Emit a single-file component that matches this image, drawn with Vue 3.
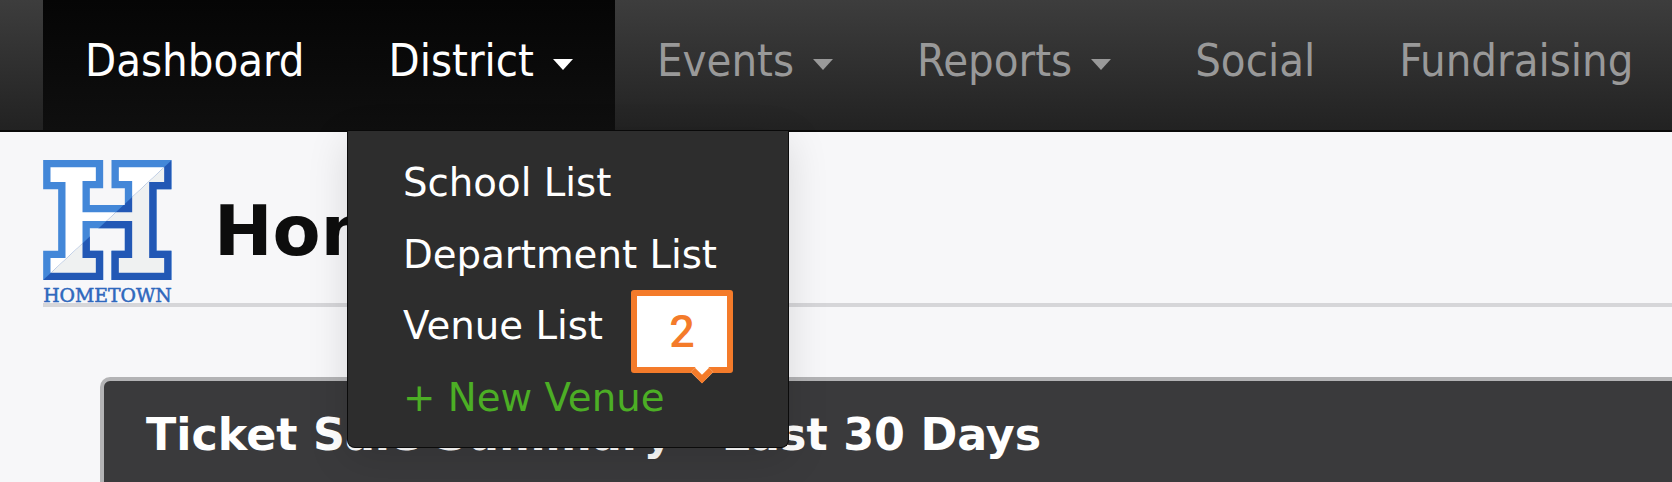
<script setup>
const navItems = [
  { label: 'Dashboard', active: true },
  { label: 'District', active: true, caret: true },
  { label: 'Events', caret: true },
  { label: 'Reports', caret: true },
  { label: 'Social' },
  { label: 'Fundraising' },
]
const menuItems = ['School List', 'Department List', 'Venue List']
const outer = 'M130 90H310V175H270V225H375V175H335V90H515V178H470V362H515V450H335V362H375V295H270V362H310V450H130V362H175V178H130Z'
const inner = 'M152 112H288V153H248V247H397V153H357V112H493V156H448V384H493V428H357V384H397V273H248V384H288V428H152V384H197V156H152Z'
</script>

<template>
  <div class="page">
    <nav class="nav">
      <a
        v-for="item in navItems"
        :key="item.label"
        class="nav-item"
        :class="{ active: item.active }"
      >
        {{ item.label }}<span v-if="item.caret" class="caret"></span>
      </a>
    </nav>

    <header class="head">
      <svg class="logo" viewBox="130 90 386 441" width="129" height="147">
        <defs>
          <clipPath id="lower"><path d="M130 450L516 90V531H130Z" /></clipPath>
        </defs>
        <path :d="outer" fill="#4387d8" />
        <path :d="inner" fill="#ffffff" />
        <g clip-path="url(#lower)">
          <path :d="outer" fill="#2258b5" />
          <path :d="inner" fill="#eff1f1" />
        </g>
        <text x="130" y="517" class="logo-text" textLength="386" lengthAdjust="spacingAndGlyphs">HOMETOWN</text>
      </svg>
      <h1 class="title">Hometown</h1>
    </header>

    <section class="panel">
      <h2 class="panel-title">Ticket Sale Summary - Last 30 Days</h2>
    </section>

    <div class="menu">
      <div v-for="m in menuItems" :key="m" class="menu-item">{{ m }}</div>
      <div class="menu-item new">+ New Venue</div>
      <div class="callout">2<span class="tip"></span></div>
    </div>
  </div>
</template>

<style>
html, body { margin: 0; background: #f7f7f9; overflow: hidden; }
</style>

<style scoped>
.page {
  position: relative;
  width: 1672px;
  height: 482px;
  overflow: hidden;
  background: #f7f7f9;
  font-family: "DejaVu Sans", Verdana, sans-serif;
}
.nav {
  display: flex;
  box-sizing: border-box;
  height: 132px;
  padding-left: 43px;
  background: linear-gradient(#3d3d3d, #222222);
  border-bottom: 2px solid #0a0a0a;
}
.nav-item {
  display: flex;
  align-items: center;
  padding: 0 42px 10px;
  color: #999999;
  font-size: 45px;
  font-stretch: condensed;
  white-space: nowrap;
}
.nav-item.active {
  color: #ffffff;
  background: linear-gradient(#050505, #0f0f0f);
}
.caret {
  width: 0;
  height: 0;
  margin: 8px 0 0 19px;
  border-left: 10px solid transparent;
  border-right: 10px solid transparent;
  border-top: 11px solid currentColor;
}
.head {
  display: flex;
  align-items: flex-start;
  box-sizing: border-box;
  height: 147px;
  margin: 28px 0 0 43px;
  border-bottom: 4px solid #d6d6d9;
}
.logo { flex: none; display: block; overflow: visible; }
.logo-text {
  font-family: "DejaVu Serif", serif;
  font-weight: 400;
  font-size: 54px;
  fill: #2f68bd;
  stroke: #2f68bd;
  stroke-width: 1.5;
}
.title {
  margin: 36px 0 0 42px;
  font-size: 70px;
  font-weight: 700;
  line-height: 1;
  color: #0d0d0d;
}
.panel {
  height: 200px;
  margin: 70px 0 0 100px;
  padding: 26px 0 0 42px;
  border: 4px solid #b3b3b5;
  border-right: 0;
  border-bottom: 0;
  border-radius: 10px 0 0 0;
  background: #3a3a3c;
}
.panel-title {
  margin: 0;
  font-size: 44.4px;
  font-weight: 700;
  line-height: 1.25;
  color: #ffffff;
  white-space: nowrap;
}
.menu {
  position: absolute;
  left: 347px;
  top: 131px;
  width: 442px;
  height: 317px;
  box-sizing: border-box;
  padding: 16px 0 0 55px;
  background: #2d2d2d;
  border: 1px solid #0b0b0b;
  border-top-width: 0;
  border-radius: 0 0 8px 8px;
  box-shadow: 0 10px 40px rgba(0, 0, 0, 0.13);
}
.menu-item {
  height: 71.5px;
  line-height: 71.5px;
  font-size: 38.7px;
  color: #ffffff;
  white-space: nowrap;
}
.menu-item.new { color: #4cae25; }
.callout {
  position: absolute;
  left: 283px;
  top: 159px;
  width: 102px;
  height: 83px;
  box-sizing: border-box;
  display: flex;
  align-items: center;
  justify-content: center;
  background: #ffffff;
  border: 6px solid #f47b2a;
  border-radius: 3px;
  color: #f47b2a;
  font-family: Roboto, sans-serif;
  font-weight: 500;
  font-size: 45px;
}
.tip {
  position: absolute;
  left: 57px;
  bottom: -13px;
  width: 16px;
  height: 16px;
  box-sizing: border-box;
  background: #ffffff;
  border: solid #f47b2a;
  border-width: 0 6px 6px 0;
  transform: rotate(45deg);
}
</style>
